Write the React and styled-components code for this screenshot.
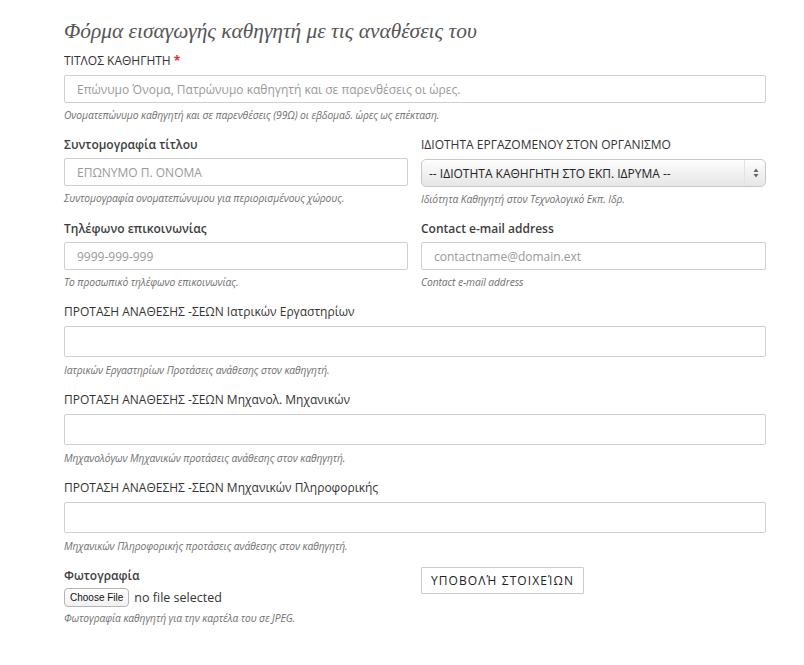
import React from "react";
import styled, { createGlobalStyle } from "styled-components";

const Global = createGlobalStyle`
  html, body { margin: 0; padding: 0; background: #fff; }
  body { font-family: "Open Sans", "Liberation Sans", sans-serif; color: #333; }
  * { box-sizing: border-box; }
`;

const Page = styled.div`
  width: 804px;
  padding: 15px 38px 20px 64px;
`;

const Title = styled.h1`
  margin: 0 0 5px;
  font-family: "Liberation Serif", "DejaVu Serif", serif;
  font-style: italic;
  font-weight: normal;
  font-size: 21.4px;
  line-height: 32px;
  color: #555;
`;

const Grid = styled.div`
  display: grid;
  grid-template-columns: 344px 345px;
  column-gap: 13px;
`;

const Field = styled.div`
  grid-column: ${(p) => (p.full ? "1 / -1" : "auto")};
  display: flex;
  flex-direction: column;
  padding-bottom: ${(p) => p.pb ?? 14}px;
`;

const Label = styled.label`
  font-size: 12px;
  line-height: 17px;
  font-weight: ${(p) => (p.strong ? 600 : 500)};
  color: ${(p) => (p.strong ? "#3d3d3d" : "#333")};
  margin-bottom: ${(p) => (p.strong ? 5 : 6)}px;
`;

const Req = styled.span`
  color: #d9302c;
  font-weight: 700;
`;

const Input = styled.input`
  height: ${(p) => p.h || 28}px;
  width: 100%;
  border: 1px solid #cfcfcf;
  border-radius: 2px;
  padding: 0 12px;
  font-family: "Open Sans", "Liberation Sans", sans-serif;
  font-size: 12px;
  color: #555;
  background: #fff;
  outline: none;
  &::placeholder { color: #999; }
`;

const SelectBox = styled.div`
  height: 28px;
  border: 1px solid #c8c8c8;
  border-radius: 5px;
  background: linear-gradient(#fdfdfd, #e6e6e6);
  box-shadow: inset 0 1px 0 #fff;
  display: flex;
  align-items: center;
  justify-content: space-between;
  padding: 0 6px 0 7px;
  font-size: 12px;
  color: #222;
`;

const Arrows = styled.span`
  display: flex;
  align-items: center;
  height: 100%;
  border-left: 1px solid #e2e2e2;
  padding-left: 8px;
`;

const Help = styled.div`
  margin-top: ${(p) => p.mt ?? 6}px;
  font-size: 10.3px;
  line-height: 13px;
  font-style: italic;
  color: #707070;
  letter-spacing: -0.1px;
`;

const FileRow = styled.div`
  display: flex;
  align-items: center;
  gap: 5px;
  margin-top: -1px;
`;

const FileButton = styled.button`
  font-family: "Liberation Sans", Arial, sans-serif;
  font-size: 10px;
  height: 19px;
  padding: 0 5px;
  border: 1px solid #b5b5b5;
  border-radius: 4px;
  background: linear-gradient(#fff, #f1f1f1);
  color: #111;
`;

const FileText = styled.span`
  font-size: 12.5px;
  color: #333;
`;

const SubmitCol = styled.div`
  display: flex;
  align-items: flex-start;
`;

const Submit = styled.button`
  height: 27px;
  width: 163px;
  border: 1px solid #ccc;
  background: #fff;
  border-radius: 1px;
  font-family: "Open Sans", "Liberation Sans", sans-serif;
  font-size: 12px;
  letter-spacing: 1.1px;
  color: #222;
`;

function SelectArrows() {
  return (
    <svg width="6" height="10" viewBox="0 0 6 10">
      <path d="M3 0.5 L5.5 4 L0.5 4 Z" fill="#666" />
      <path d="M3 9.5 L5.5 6 L0.5 6 Z" fill="#666" />
    </svg>
  );
}

export default function App() {
  return (
    <Page>
      <Global />
      <Title>Φόρμα εισαγωγής καθηγητή με τις αναθέσεις του</Title>
      <Grid>
        <Field full>
          <Label>
            ΤΙΤΛΟΣ ΚΑΘΗΓΗΤΗ <Req>*</Req>
          </Label>
          <Input placeholder="Επώνυμο Όνομα, Πατρώνυμο καθηγητή και σε παρενθέσεις οι ώρες." />
          <Help>Ονοματεπώνυμο καθηγητή και σε παρενθέσεις (99Ω) οι εβδομαδ. ώρες ως επέκταση.</Help>
        </Field>
        <Field>
          <Label strong>Συντομογραφία τίτλου</Label>
          <Input placeholder="ΕΠΩΝΥΜΟ Π. ΟΝΟΜΑ" />
          <Help>Συντομογραφία ονοματεπώνυμου για περιορισμένους χώρους.</Help>
        </Field>
        <Field>
          <Label>ΙΔΙΟΤΗΤΑ ΕΡΓΑΖΟΜΕΝΟΥ ΣΤΟΝ ΟΡΓΑΝΙΣΜΟ</Label>
          <SelectBox>
            <span>-- ΙΔΙΟΤΗΤΑ ΚΑΘΗΓΗΤΗ ΣΤΟ ΕΚΠ. ΙΔΡΥΜΑ --</span>
            <Arrows>
              <SelectArrows />
            </Arrows>
          </SelectBox>
          <Help>Ιδιότητα Καθηγητή στον Τεχνολογικό Εκπ. Ιδρ.</Help>
        </Field>
        <Field>
          <Label strong>Τηλέφωνο επικοινωνίας</Label>
          <Input placeholder="9999-999-999" />
          <Help>Το προσωπικό τηλέφωνο επικοινωνίας.</Help>
        </Field>
        <Field>
          <Label strong>Contact e-mail address</Label>
          <Input placeholder="contactname@domain.ext" />
          <Help>Contact e-mail address</Help>
        </Field>
        <Field full>
          <Label>ΠΡΟΤΑΣΗ ΑΝΑΘΕΣΗΣ -ΣΕΩΝ Ιατρικών Εργαστηρίων</Label>
          <Input h={31} />
          <Help mt={7}>Ιατρικών Εργαστηρίων Προτάσεις ανάθεσης στον καθηγητή.</Help>
        </Field>
        <Field full>
          <Label>ΠΡΟΤΑΣΗ ΑΝΑΘΕΣΗΣ -ΣΕΩΝ Μηχανολ. Μηχανικών</Label>
          <Input h={31} />
          <Help mt={7}>Μηχανολόγων Μηχανικών προτάσεις ανάθεσης στον καθηγητή.</Help>
        </Field>
        <Field full>
          <Label>ΠΡΟΤΑΣΗ ΑΝΑΘΕΣΗΣ -ΣΕΩΝ Μηχανικών Πληροφορικής</Label>
          <Input h={31} />
          <Help mt={7}>Μηχανικών Πληροφορικής προτάσεις ανάθεσης στον καθηγητή.</Help>
        </Field>
        <Field pb={0}>
          <Label strong>Φωτογραφία</Label>
          <FileRow>
            <FileButton type="button">Choose File</FileButton>
            <FileText>no file selected</FileText>
          </FileRow>
          <Help mt={5}>Φωτογραφία καθηγητή για την καρτέλα του σε JPEG.</Help>
        </Field>
        <SubmitCol>
          <Submit type="button">ΥΠΟΒΟΛΉ ΣΤΟΙΧΕΊΩΝ</Submit>
        </SubmitCol>
      </Grid>
    </Page>
  );
}
